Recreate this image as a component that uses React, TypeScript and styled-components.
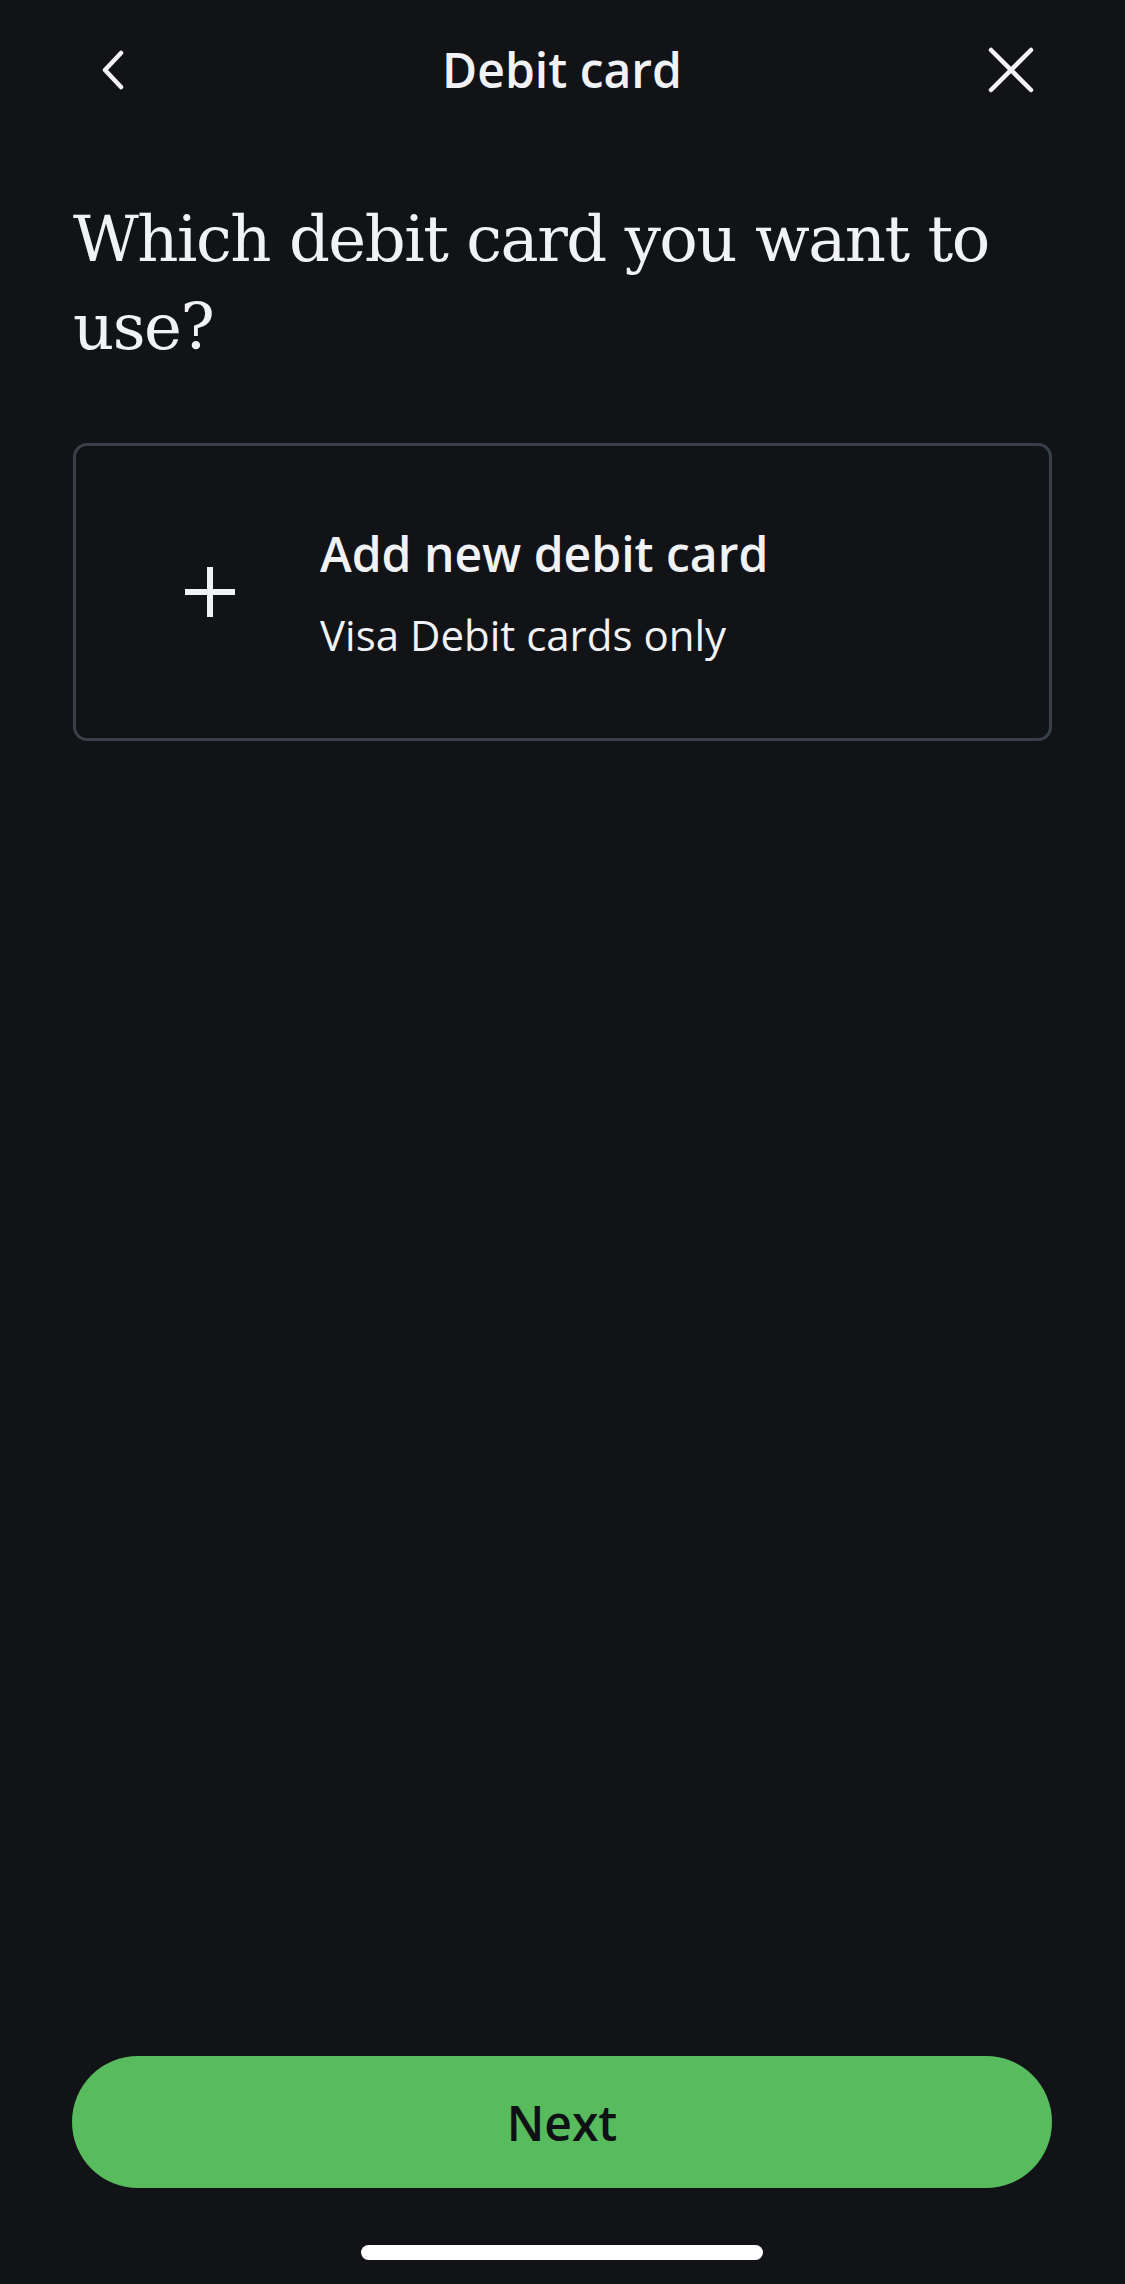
import React from "react";
import styled, { createGlobalStyle } from "styled-components";

const GlobalStyle = createGlobalStyle`
  html, body {
    margin: 0;
    padding: 0;
    background: #121317;
  }
  * { box-sizing: border-box; }
`;

const Page = styled.div`
  width: 1125px;
  min-height: 2284px;
  display: flex;
  flex-direction: column;
  background: #121317;
  color: #f1f2f5;
  font-family: "Open Sans", "Noto Sans", sans-serif;
`;

const Header = styled.header`
  height: 140px;
  display: grid;
  grid-template-columns: 80px 1fr 80px;
  align-items: center;
  padding: 0 74px 0 73px;
`;

const IconButton = styled.button`
  width: 80px;
  height: 80px;
  display: flex;
  align-items: center;
  justify-content: center;
  background: none;
  border: 0;
  padding: 0;
  color: #f4f4f6;
  cursor: pointer;
`;

const HeaderTitle = styled.h2`
  margin: 0;
  text-align: center;
  font-size: 48px;
  line-height: 48px;
  font-weight: 600;
`;

const Content = styled.main`
  flex: 1;
  display: flex;
  flex-direction: column;
  padding: 0 73px;
`;

const Title = styled.h1`
  margin: 55px 0 0;
  font-family: "DejaVu Serif", "Liberation Serif", serif;
  font-weight: 400;
  font-size: 64px;
  line-height: 88px;
  letter-spacing: -1.5px;
`;

const OptionCard = styled.button`
  margin-top: 72px;
  height: 298px;
  width: 100%;
  display: flex;
  align-items: center;
  gap: 85px;
  padding: 0 0 0 109px;
  background: #121317;
  border: 3px solid #394049;
  border-radius: 14px;
  color: inherit;
  font-family: inherit;
  text-align: left;
  cursor: pointer;
`;

const OptionText = styled.div`
  display: flex;
  flex-direction: column;
  gap: 21px;
`;

const OptionTitle = styled.span`
  font-size: 48px;
  line-height: 64px;
  font-weight: 600;
`;

const OptionSub = styled.span`
  font-size: 42px;
  line-height: 56px;
  font-weight: 400;
`;

const Footer = styled.footer`
  display: flex;
  flex-direction: column;
  align-items: center;
  padding: 0 73px 24px 72px;
`;

const PrimaryButton = styled.button`
  width: 100%;
  height: 132px;
  border: 0;
  border-radius: 66px;
  background: #58bb5d;
  color: #0f1114;
  font-family: "Open Sans", "Noto Sans", sans-serif;
  font-size: 48px;
  font-weight: 600;
  cursor: pointer;
`;

const HomeIndicator = styled.div`
  margin-top: 57px;
  width: 402px;
  height: 15px;
  border-radius: 8px;
  background: #ffffff;
`;

export default function App() {
  return (
    <>
      <GlobalStyle />
      <Page>
        <Header>
          <IconButton aria-label="Back">
            <svg width="24" height="40" viewBox="0 0 24 40" fill="none">
              <polyline
                points="20,3 4,20 20,37"
                stroke="currentColor"
                strokeWidth="4.5"
                strokeLinecap="round"
                strokeLinejoin="round"
              />
            </svg>
          </IconButton>
          <HeaderTitle>Debit card</HeaderTitle>
          <IconButton aria-label="Close">
            <svg width="46" height="46" viewBox="0 0 46 46" fill="none">
              <path
                d="M3 3 L43 43 M43 3 L3 43"
                stroke="currentColor"
                strokeWidth="4.5"
                strokeLinecap="round"
              />
            </svg>
          </IconButton>
        </Header>
        <Content>
          <Title>Which debit card you want to use?</Title>
          <OptionCard>
            <svg width="50" height="50" viewBox="0 0 50 50" fill="none">
              <path
                d="M25 0 V50 M0 25 H50"
                stroke="currentColor"
                strokeWidth="6"
              />
            </svg>
            <OptionText>
              <OptionTitle>Add new debit card</OptionTitle>
              <OptionSub>Visa Debit cards only</OptionSub>
            </OptionText>
          </OptionCard>
        </Content>
        <Footer>
          <PrimaryButton>Next</PrimaryButton>
          <HomeIndicator />
        </Footer>
      </Page>
    </>
  );
}
